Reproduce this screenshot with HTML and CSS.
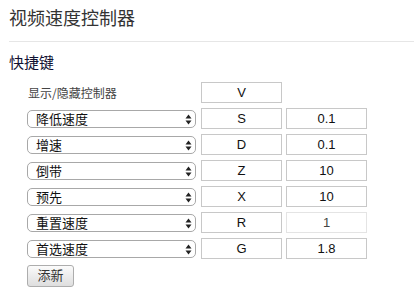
FILE: index.html
```html
<!DOCTYPE html>
<html lang="zh-CN">
<head>
<meta charset="utf-8">
<link rel="stylesheet" href="styles.css">
</head>
<body>
<div class="page">
  <header class="header"><h1 class="title">视频速度控制器</h1></header>
  <h2 class="section-title">快捷键</h2>
  <div class="shortcuts">
    <div class="row">
      <div class="label">显示/隐藏控制器</div>
      <input class="key" type="text" value="V">
    </div>
    <div class="row">
      <div class="select-wrap"><select class="action"><option>降低速度</option></select><svg class="arrows" width="7" height="11" viewBox="0 0 7 11"><path d="M3.5 0.5 L6.5 4.5 H0.5 Z M3.5 10.5 L6.5 6.5 H0.5 Z" fill="#222"/></svg></div>
      <input class="key" type="text" value="S">
      <input class="val" type="text" value="0.1">
    </div>
    <div class="row">
      <div class="select-wrap"><select class="action"><option>增速</option></select><svg class="arrows" width="7" height="11" viewBox="0 0 7 11"><path d="M3.5 0.5 L6.5 4.5 H0.5 Z M3.5 10.5 L6.5 6.5 H0.5 Z" fill="#222"/></svg></div>
      <input class="key" type="text" value="D">
      <input class="val" type="text" value="0.1">
    </div>
    <div class="row">
      <div class="select-wrap"><select class="action"><option>倒带</option></select><svg class="arrows" width="7" height="11" viewBox="0 0 7 11"><path d="M3.5 0.5 L6.5 4.5 H0.5 Z M3.5 10.5 L6.5 6.5 H0.5 Z" fill="#222"/></svg></div>
      <input class="key" type="text" value="Z">
      <input class="val" type="text" value="10">
    </div>
    <div class="row">
      <div class="select-wrap"><select class="action"><option>预先</option></select><svg class="arrows" width="7" height="11" viewBox="0 0 7 11"><path d="M3.5 0.5 L6.5 4.5 H0.5 Z M3.5 10.5 L6.5 6.5 H0.5 Z" fill="#222"/></svg></div>
      <input class="key" type="text" value="X">
      <input class="val" type="text" value="10">
    </div>
    <div class="row">
      <div class="select-wrap"><select class="action"><option>重置速度</option></select><svg class="arrows" width="7" height="11" viewBox="0 0 7 11"><path d="M3.5 0.5 L6.5 4.5 H0.5 Z M3.5 10.5 L6.5 6.5 H0.5 Z" fill="#222"/></svg></div>
      <input class="key" type="text" value="R">
      <input class="val val-disabled" type="text" value="1" disabled>
    </div>
    <div class="row">
      <div class="select-wrap"><select class="action"><option>首选速度</option></select><svg class="arrows" width="7" height="11" viewBox="0 0 7 11"><path d="M3.5 0.5 L6.5 4.5 H0.5 Z M3.5 10.5 L6.5 6.5 H0.5 Z" fill="#222"/></svg></div>
      <input class="key" type="text" value="G">
      <input class="val" type="text" value="1.8">
    </div>
  </div>
  <button class="add-btn" type="button">添新</button>
</div>
</body>
</html>
```

FILE: styles.css
```css
html, body {
  margin: 0;
  padding: 0;
  background: #fff;
}
body {
  font-family: "Noto Sans CJK SC", "Liberation Sans", sans-serif;
  color: #222;
}
.page {
  padding: 6px 0 0 9px;
}
.header {
  border-bottom: 1px solid #e6e6e6;
  padding-bottom: 13px;
}
.title {
  margin: 0;
  font-size: 18px;
  line-height: 22px;
  font-weight: normal;
  color: #333;
}
.section-title {
  margin: 11px 0 0 0;
  font-size: 15px;
  line-height: 18px;
  font-weight: normal;
  color: #111133;
}
.shortcuts {
  display: flex;
  flex-direction: column;
  gap: 5px;
  margin: 11px 0 0 18px;
}
.row {
  display: flex;
  align-items: center;
  height: 21px;
}
.label {
  width: 169px;
  margin-right: 5px;
  padding-left: 1px;
  box-sizing: border-box;
  font-size: 12px;
  line-height: 14px;
  color: #444;
}
.select-wrap {
  position: relative;
  width: 169px;
  height: 18px;
  margin-right: 5px;
}
.action {
  display: block;
  appearance: none;
  -webkit-appearance: none;
  width: 100%;
  height: 18px;
  box-sizing: border-box;
  margin: 0;
  padding: 0 0 0 8px;
  border: 1px solid #a8a8a8;
  border-radius: 5px;
  background: #fff;
  font-family: "Noto Sans CJK SC", sans-serif;
  font-size: 13px;
  line-height: 16px;
  color: #111;
}
.arrows {
  position: absolute;
  right: 4px;
  top: 4px;
  pointer-events: none;
}
.key, .val {
  display: block;
  width: 81px;
  height: 21px;
  box-sizing: border-box;
  margin: 0;
  padding: 0;
  border: 1px solid #c8c8c8;
  border-radius: 0;
  background: #fff;
  text-align: center;
  font-family: "Liberation Sans", Arial, sans-serif;
  font-size: 13px;
  color: #111;
}
.key {
  margin-right: 4px;
}
.val-disabled {
  border-color: #e4e4e4;
  color: #444;
}
.add-btn {
  display: block;
  margin: 6px 0 0 18px;
  width: 47px;
  height: 22px;
  padding: 0 0 2px 0;
  border: 1px solid #adadad;
  border-radius: 3px;
  background: linear-gradient(#fbfbfb, #dedede);
  font-family: "Noto Sans CJK SC", sans-serif;
  font-size: 13px;
  line-height: 16px;
  color: #333;
}
```
